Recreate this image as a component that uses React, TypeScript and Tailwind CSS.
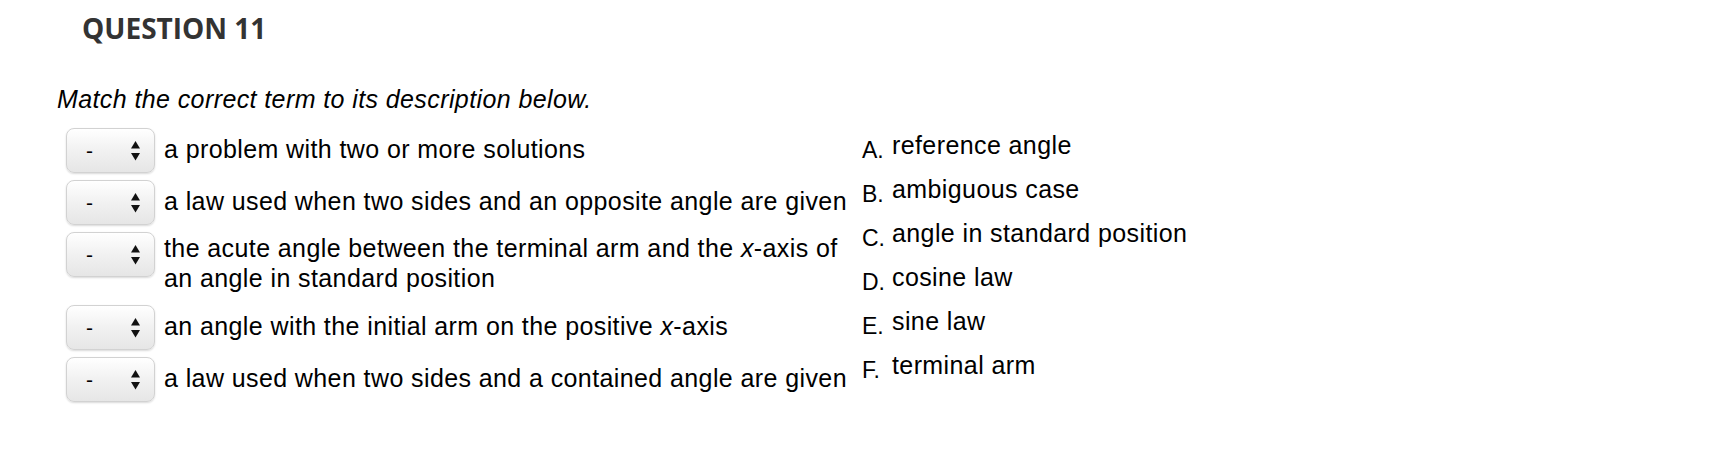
import React from "react";

type Row = { id: number; text: React.ReactNode; wrapped?: boolean };

const rows: Row[] = [
  { id: 1, text: "a problem with two or more solutions" },
  { id: 2, text: "a law used when two sides and an opposite angle are given" },
  {
    id: 3,
    wrapped: true,
    text: (
      <>
        the acute angle between the terminal arm and the <i>x</i>-axis of an angle in
        standard position
      </>
    ),
  },
  {
    id: 4,
    text: (
      <>
        an angle with the initial arm on the positive <i>x</i>-axis
      </>
    ),
  },
  { id: 5, text: "a law used when two sides and a contained angle are given" },
];

const answers = [
  { letter: "A.", term: "reference angle" },
  { letter: "B.", term: "ambiguous case" },
  { letter: "C.", term: "angle in standard position" },
  { letter: "D.", term: "cosine law" },
  { letter: "E.", term: "sine law" },
  { letter: "F.", term: "terminal arm" },
];

const SelectBox: React.FC = () => (
  <div className="w-[89px] h-[45px] shrink-0 rounded-[8px] border border-[#d2d2d2] bg-gradient-to-b from-white via-[#f1f1f1] to-[#e6e6e6] shadow-[0_1px_2px_rgba(0,0,0,0.15)] flex items-center justify-between pl-[19px] pr-[14px]">
    <span className="text-[21px] leading-none text-black">-</span>
    <svg width="9" height="20" viewBox="0 0 9 20" className="text-[#111]">
      <path d="M4.5 0 L9 7.5 L0 7.5 Z" fill="currentColor" />
      <path d="M0 12 L9 12 L4.5 19.5 Z" fill="currentColor" />
    </svg>
  </div>
);

const App: React.FC = () => {
  return (
    <div className="w-[1722px] h-[454px] bg-white text-black font-['Liberation_Sans',Arial,sans-serif] overflow-hidden">
      <h1 className="pl-[82px] pt-[10px] text-[28px] leading-[36px] font-bold text-[#333333] font-['Open_Sans',sans-serif]">
        QUESTION 11
      </h1>

      <p className="mt-[38px] pl-[57px] text-[25px] leading-[30px] italic tracking-[0.4px]">
        Match the correct term to its description below.
      </p>

      <div className="mt-[14px] pl-[66px] flex items-start">
        {/* Descriptions */}
        <div className="w-[796px] flex flex-col gap-[7px]">
          {rows.map((row) => (
            <div key={row.id} className="flex items-start gap-[9px]">
              <SelectBox />
              <div
                className={
                  row.wrapped
                    ? "w-[690px] pt-[1px] pb-[5px] text-[25px] leading-[30px] tracking-[0.4px]"
                    : "w-[690px] pt-[6px] text-[25px] leading-[30px] tracking-[0.4px]"
                }
              >
                {row.text}
              </div>
            </div>
          ))}
        </div>

        {/* Terms */}
        <div className="flex flex-col gap-[10px]">
          {answers.map((a) => (
            <div key={a.letter} className="text-[25px] leading-[34px] tracking-[0.4px] whitespace-nowrap">
              <span className="inline-block w-[30px] text-[23px] leading-none tracking-normal align-[-4px]">
                {a.letter}
              </span>
              {a.term}
            </div>
          ))}
        </div>
      </div>
    </div>
  );
};

export default App;
